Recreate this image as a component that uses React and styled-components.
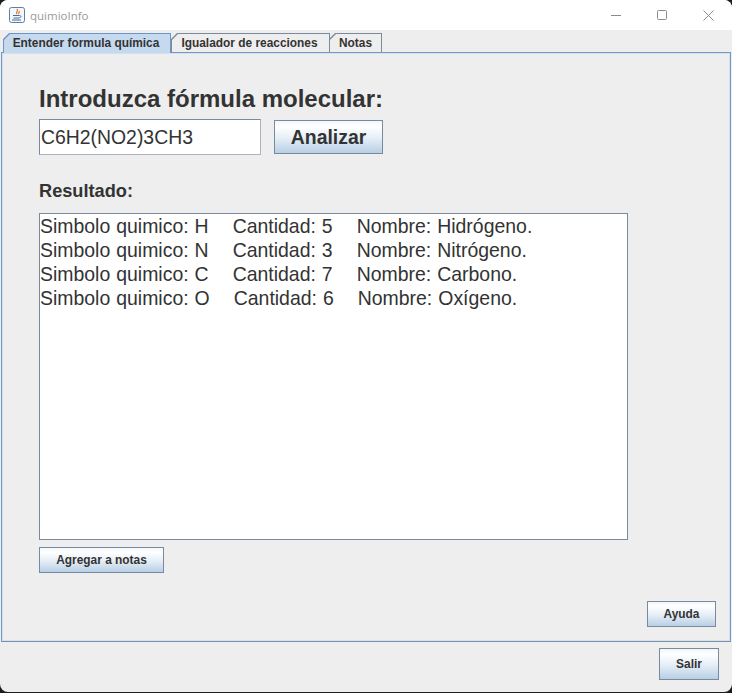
import styled, { createGlobalStyle } from "styled-components";

const Global = createGlobalStyle`
  html, body {
    margin: 0;
    padding: 0;
    background: #1c1c1c;
  }
  body {
    font-family: "Liberation Sans", Arial, sans-serif;
  }
`;

const Frame = styled.div`
  width: 732px;
  height: 692px;
  background: #eeeeee;
  border-radius: 8px;
  overflow: hidden;
  display: flex;
  flex-direction: column;
  color: #333333;
`;

const TitleBar = styled.header`
  height: 30px;
  background: #ffffff;
  display: flex;
  align-items: center;
  padding-left: 9px;
  flex: none;
`;

const AppName = styled.span`
  margin-left: 5px;
  font-family: "Open Sans", "Liberation Sans", sans-serif;
  font-size: 11.5px;
  color: #9a9a9a;
`;

const WindowButtons = styled.div`
  margin-left: auto;
  margin-right: 1px;
  display: flex;
`;

const WindowButton = styled.div`
  width: 46px;
  height: 30px;
  display: flex;
  align-items: center;
  justify-content: center;
`;

const TabRow = styled.nav`
  display: flex;
  padding: 3px 0 0 3px;
  height: 19px;
  flex: none;
  position: relative;
  z-index: 1;
`;

const Tab = styled.div`
  height: ${(p) => (p.$active ? "20px" : "19px")};
  padding: 1px 1px 0 1px;
  background: ${(p) => (p.$active ? "#6f95c6" : "#7a8a9e")};
  clip-path: polygon(6px 0, 100% 0, 100% 100%, 0 100%, 0 6px);
  margin-right: ${(p) => (p.$active ? "0" : "-1px")};
  box-sizing: border-box;
`;

const TabLabel = styled.div`
  height: 100%;
  box-sizing: border-box;
  width: ${(p) => p.$width}px;
  padding-right: ${(p) => p.$pad || 0}px;
  background: ${(p) => (p.$active ? "#c5daef" : "#eeeeee")};
  clip-path: polygon(6px 0, 100% 0, 100% 100%, 0 100%, 0 6px);
  font-size: 11.9px;
  font-weight: bold;
  line-height: 19px;
  text-align: center;
  white-space: pre;
`;

const TabPanel = styled.main`
  height: 590px;
  margin: 0 0 0 1px;
  width: 730px;
  box-sizing: border-box;
  border: 1px solid #7397c8;
  border-bottom-color: #7d8fa5;
  box-shadow: inset 0 0 0 1px #d3e1f1;
  padding: 32px 0 0 37px;
  display: flex;
  flex-direction: column;
  flex: none;
`;

const Heading = styled.h1`
  margin: 0;
  font-size: 24px;
  line-height: 28px;
  font-weight: bold;
`;

const FormRow = styled.div`
  display: flex;
  align-items: center;
  margin-top: 6px;
`;

const FormulaInput = styled.input`
  width: 222px;
  height: 36px;
  box-sizing: border-box;
  border: 1px solid #7a8a9e;
  border-right-color: #a9b4c0;
  border-bottom-color: #a9b4c0;
  background: #ffffff;
  padding: 0 1px;
  font-family: "Liberation Sans", Arial, sans-serif;
  font-size: 19.4px;
  color: #333333;
  outline: none;
`;

const Button = styled.button`
  display: block;
  box-sizing: border-box;
  padding: 0;
  width: ${(p) => p.$w}px;
  height: ${(p) => p.$h}px;
  border: 1px solid #7a8a9e;
  background: linear-gradient(#f2f6fb 0%, #ffffff 18%, #e4edf6 55%, #b8cfe5 100%);
  font-family: "Liberation Sans", Arial, sans-serif;
  font-size: ${(p) => p.$size}px;
  font-weight: bold;
  color: #333333;
`;

const AnalyzeButton = styled(Button)`
  margin-left: 13px;
`;

const SubHeading = styled.h2`
  margin: 25px 0 0;
  font-size: 18.2px;
  line-height: 22px;
  font-weight: bold;
`;

const ResultBox = styled.div`
  margin-top: 11px;
  width: 589px;
  height: 327px;
  box-sizing: border-box;
  border: 1px solid #7a8a9e;
  background: #ffffff;
`;

const ResultLine = styled.div`
  font-size: 19.45px;
  word-spacing: 0.6px;
  line-height: 24px;
  white-space: pre;
`;

const NotesButton = styled(Button)`
  margin-top: 7px;
`;

const HelpButton = styled(Button)`
  align-self: flex-end;
  margin: 28px 14px 0 0;
`;

const Footer = styled.footer`
  flex: 1;
  display: flex;
  justify-content: flex-end;
  align-items: flex-start;
  padding: 6px 13px 0 0;
`;

function JavaIcon() {
  return (
    <svg width="16" height="16" viewBox="0 0 16 16">
      <rect x="0.5" y="0.5" width="15" height="15" rx="2" fill="#f4f7fb" stroke="#5f7f9f" />
      <path d="M8 2c2 2-2 3 0 5M10 4c1 1-1 2 0 3" fill="none" stroke="#e0701c" strokeWidth="1.2" />
      <path d="M4 8.5h6.5c2 0 2 2 0 2M4.5 11h6M3 13h9" fill="none" stroke="#3f6f9f" strokeWidth="1" />
    </svg>
  );
}

const results = [
  "Simbolo quimico: H    Cantidad: 5    Nombre: Hidrógeno.",
  "Simbolo quimico: N    Cantidad: 3    Nombre: Nitrógeno.",
  "Simbolo quimico: C    Cantidad: 7    Nombre: Carbono.",
  "Simbolo quimico: O    Cantidad: 6    Nombre: Oxígeno.",
];

export default function App() {
  return (
    <>
      <Global />
      <Frame>
        <TitleBar>
          <JavaIcon />
          <AppName>quimioInfo</AppName>
          <WindowButtons>
            <WindowButton>
              <svg width="11" height="11" viewBox="0 0 11 11">
                <path d="M0 5.5h10" stroke="#8a8a8a" />
              </svg>
            </WindowButton>
            <WindowButton>
              <svg width="11" height="11" viewBox="0 0 11 11">
                <rect x="0.5" y="0.5" width="9" height="9" rx="1" fill="none" stroke="#8a8a8a" />
              </svg>
            </WindowButton>
            <WindowButton>
              <svg width="11" height="11" viewBox="0 0 11 11">
                <path d="M0.5 0.5l10 10M10.5 0.5l-10 10" stroke="#8a8a8a" />
              </svg>
            </WindowButton>
          </WindowButtons>
        </TitleBar>
        <TabRow>
          <Tab $active>
            <TabLabel $active $width={166} $pad={2}>Entender formula química</TabLabel>
          </Tab>
          <Tab>
            <TabLabel $width={157} $pad={2}>Igualador de reacciones</TabLabel>
          </Tab>
          <Tab>
            <TabLabel $width={51}>Notas</TabLabel>
          </Tab>
        </TabRow>
        <TabPanel>
          <Heading>Introduzca fórmula molecular:</Heading>
          <FormRow>
            <FormulaInput readOnly value="C6H2(NO2)3CH3" />
            <AnalyzeButton $w={109} $h={34} $size={19.4}>Analizar</AnalyzeButton>
          </FormRow>
          <SubHeading>Resultado:</SubHeading>
          <ResultBox>
            {results.map((line) => (
              <ResultLine key={line}>{line}</ResultLine>
            ))}
          </ResultBox>
          <NotesButton $w={125} $h={26} $size={11.9}>Agregar a notas</NotesButton>
          <HelpButton $w={69} $h={26} $size={11.9}>Ayuda</HelpButton>
        </TabPanel>
        <Footer>
          <Button $w={60} $h={32} $size={11.9}>Salir</Button>
        </Footer>
      </Frame>
    </>
  );
}
